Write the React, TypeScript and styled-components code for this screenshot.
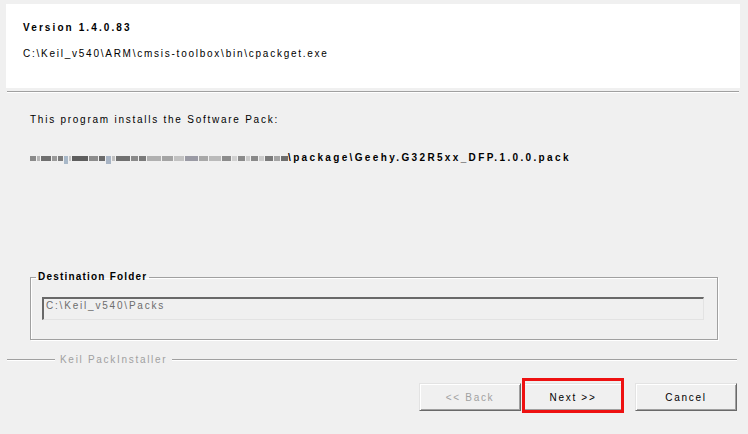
import styled, { createGlobalStyle } from 'styled-components'

const GlobalStyle = createGlobalStyle`
  html, body {
    margin: 0;
    padding: 0;
    background: #f0f0f0;
  }
  body {
    font-family: "Liberation Sans", Arial, sans-serif;
    font-size: 10px;
    color: #000;
  }
`

const Window = styled.div`
  width: 748px;
  height: 434px;
  background: #f0f0f0;
  padding-top: 4px;
  box-sizing: border-box;
  overflow: hidden;
  display: flex;
  flex-direction: column;
`

const Header = styled.div`
  margin-left: 6px;
  width: 734px;
  height: 84px;
  background: #fff;
  box-sizing: border-box;
  padding: 17px 0 0 17px;
  display: flex;
  flex-direction: column;
  gap: 12px;
`

const Line = styled.div<{ $bold?: boolean; $spacing?: number; $color?: string }>`
  line-height: 14px;
  height: 14px;
  white-space: nowrap;
  font-weight: ${(p) => (p.$bold ? 700 : 400)};
  letter-spacing: ${(p) => p.$spacing ?? 1.75}px;
  color: ${(p) => p.$color ?? '#000'};
`

const Separator = styled.div`
  margin: 3px 0 0 7px;
  width: 732px;
  border-top: 1px solid #a0a0a0;
  border-bottom: 1px solid #fff;
`

const Body = styled.div`
  padding-left: 30px;
  display: flex;
  flex-direction: column;
`

const PackRow = styled.div`
  margin-top: 24px;
  display: flex;
  align-items: center;
  height: 14px;
`

const Smudge = styled.div`
  display: flex;
  align-items: center;
  gap: 1px;
  width: 258px;
  filter: blur(0.7px);
`

const Chunk = styled.span<{ $w: number; $c: string; $drop?: boolean }>`
  display: block;
  flex: ${(p) => p.$w} 1 ${(p) => p.$w}px;
  height: ${(p) => (p.$drop ? 8 : 5)}px;
  margin-top: ${(p) => (p.$drop ? 3 : 0)}px;
  background: ${(p) => p.$c};
`

const Group = styled.fieldset`
  margin: 105px 0 0 0;
  width: 688px;
  box-sizing: border-box;
  border: 1px solid #a0a0a0;
  box-shadow: inset 1px 1px 0 #fff, 1px 1px 0 #fff;
  padding: 13px 13px 19px 11px;
`

const GroupTitle = styled.legend`
  margin-left: -6px;
  padding: 0 2px;
  line-height: 14px;
  font-weight: 700;
  letter-spacing: 1.2px;
`

const Field = styled.div`
  width: 662px;
  height: 23px;
  box-sizing: border-box;
  border-top: 2px solid #696969;
  border-left: 2px solid #696969;
  border-right: 1px solid #e3e3e3;
  border-bottom: 1px solid #e3e3e3;
  padding: 0 0 0 2px;
  color: #6d6d6d;
  letter-spacing: 1.8px;
  line-height: 14px;
`

const Brand = styled.div`
  margin: 13px 11px 0 7px;
  height: 14px;
  display: flex;
  align-items: center;
  gap: 3px;
`

const Rule = styled.span<{ $w?: number }>`
  display: block;
  ${(p) => (p.$w ? `width: ${p.$w}px;` : 'flex: 1;')}
  border-top: 1px solid #a0a0a0;
  border-bottom: 1px solid #fff;
`

const BrandText = styled.span`
  color: #a0a0a0;
  letter-spacing: 1.7px;
  line-height: 14px;
  padding: 0 2px;
`

const Buttons = styled.div`
  margin-top: 16px;
  padding-right: 11px;
  display: flex;
  justify-content: flex-end;
  align-items: center;
`

const Button = styled.button<{ $disabled?: boolean }>`
  width: 102px;
  height: 28px;
  box-sizing: border-box;
  background: #f0f0f0;
  border-top: 1px solid #e3e3e3;
  border-left: 1px solid #e3e3e3;
  border-right: 1px solid #696969;
  border-bottom: 1px solid #696969;
  box-shadow: inset 1px 1px 0 #fff, inset -1px -1px 0 #a0a0a0;
  font-family: "Liberation Sans", Arial, sans-serif;
  font-size: 10px;
  letter-spacing: 1.7px;
  color: ${(p) => (p.$disabled ? '#a0a0a0' : '#000')};
  padding: 0;
`

const Marked = styled.div`
  position: relative;
  margin-left: 1px;
  margin-right: 11px;

  &::after {
    content: '';
    position: absolute;
    left: 0;
    right: 0;
    top: -5px;
    bottom: -2px;
    border: 3px solid #ee1111;
    pointer-events: none;
  }
`

// blurred-out leading part of the pack path
const smudge: Array<[number, string, boolean?]> = [
  [5, '#8a8a8a'], [3, '#b5b5b5'], [9, '#6f6f6f'], [4, '#9a9a9a'], [5, '#7c7c7c'],
  [3, '#a8b8c8', true], [2, '#c4c4c4'], [14, '#5e5e5e'], [8, '#8c8c8c'], [6, '#6a6a6a'],
  [4, '#a8b4c4', true], [3, '#c0c0c0'], [12, '#707070'], [7, '#8a8a8a'], [6, '#7a7a7a'],
  [12, '#b0b0b0'], [10, '#a4a4a4'], [9, '#c2c2c2'], [12, '#9a9aa4'], [8, '#a8a8a8'],
  [10, '#bababa'], [8, '#8c8c8c'], [5, '#d0d0d0'], [6, '#8a8a8a'], [4, '#cacaca'],
  [6, '#8a8a8a'], [4, '#cacaca'], [7, '#7a7a7a'], [6, '#a4a4a4'], [6, '#6e6e6e'],
]

export default function App() {
  return (
    <>
      <GlobalStyle />
      <Window>
        <Header>
          <Line $bold $spacing={2.1}>Version 1.4.0.83</Line>
          <Line>C:\Keil_v540\ARM\cmsis-toolbox\bin\cpackget.exe</Line>
        </Header>
        <Separator />
        <Body>
          <Line style={{ marginTop: 20 }}>This program installs the Software Pack:</Line>
          <PackRow>
            <Smudge>
              {smudge.map(([w, c, d], i) => (
                <Chunk key={i} $w={w} $c={c} $drop={d} />
              ))}
            </Smudge>
            <Line $bold $spacing={2.35}>\package\Geehy.G32R5xx_DFP.1.0.0.pack</Line>
          </PackRow>
          <Group>
            <GroupTitle>Destination Folder</GroupTitle>
            <Field>C:\Keil_v540\Packs</Field>
          </Group>
        </Body>
        <Brand>
          <Rule $w={48} />
          <BrandText>Keil PackInstaller</BrandText>
          <Rule />
        </Brand>
        <Buttons>
          <Button $disabled>&lt;&lt; Back</Button>
          <Marked>
            <Button>Next &gt;&gt;</Button>
          </Marked>
          <Button>Cancel</Button>
        </Buttons>
      </Window>
    </>
  )
}
